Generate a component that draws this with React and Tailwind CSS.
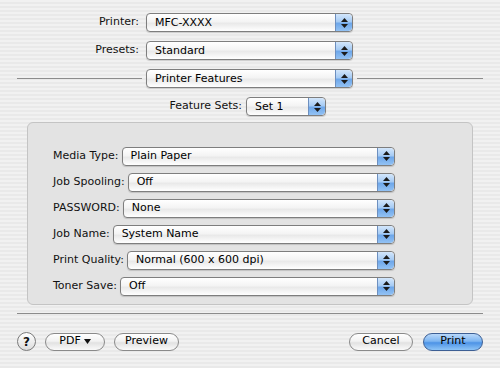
import React from 'react';

function Arrows() {
    return (
        <div className="flex w-[17px] flex-col items-center justify-center gap-[2px] self-stretch rounded-r-[4px] border-l border-[#6d8fbf] bg-[linear-gradient(to_bottom,#d3e6fb_0%,#a6cbf4_45%,#6ea7ea_55%,#93c2f4_100%)]">
            <svg width="7" height="4" viewBox="0 0 7 4"><path d="M3.5 0L7 4H0Z" fill="#1b1b1b" /></svg>
            <svg width="7" height="4" viewBox="0 0 7 4"><path d="M0 0H7L3.5 4Z" fill="#1b1b1b" /></svg>
        </div>
    );
}

function Popup({ value, className = '' }) {
    return (
        <div className={`flex h-[19px] items-center overflow-hidden rounded-[4px] border border-[#7e7e7e] bg-[linear-gradient(to_bottom,#ffffff_0%,#f4f4f4_45%,#e9e9e9_55%,#ffffff_100%)] shadow-[0_1px_1px_rgba(0,0,0,0.15)] ${className}`}>
            <span className="flex-1 whitespace-nowrap pl-[8px] leading-[16px] text-[#000]">{value}</span>
            <Arrows />
        </div>
    );
}

function Row({ label, value }) {
    return (
        <div className="flex h-[18px] items-center">
            <span className="pr-[3px] whitespace-nowrap">{label}</span>
            <Popup value={value} className="h-[18px] flex-1" />
        </div>
    );
}

function Button({ children, className = '' }) {
    return (
        <button type="button"
                className={`flex h-[18px] items-center justify-center rounded-full border border-[#8a8a8a] bg-[linear-gradient(to_bottom,#ffffff_0%,#f2f2f2_45%,#e2e2e2_55%,#fafafa_100%)] text-[#000] ${className}`}>
            {children}
        </button>
    );
}

const features = [
    ['Media Type:', 'Plain Paper'],
    ['Job Spooling:', 'Off'],
    ['PASSWORD:', 'None'],
    ['Job Name:', 'System Name'],
    ['Print Quality:', 'Normal (600 x 600 dpi)'],
    ['Toner Save:', 'Off'],
];

export default function App() {
    return (
        <div className="relative h-[368px] w-[500px] overflow-hidden bg-[repeating-linear-gradient(to_bottom,#f1f1f1_0px,#f1f1f1_2px,#e9e9e9_2px,#e9e9e9_4px)] font-['DejaVu_Sans',sans-serif] text-[11px] text-[#111]">
            <div className="flex flex-col gap-[9px] pt-[13px]">
                <div className="flex items-center">
                    <span className="w-[139px] text-right">Printer:</span>
                    <Popup value="MFC-XXXX" className="ml-[7px] w-[207px]" />
                </div>
                <div className="flex items-center">
                    <span className="w-[139px] text-right">Presets:</span>
                    <Popup value="Standard" className="ml-[7px] w-[207px]" />
                </div>
                <div className="flex items-center">
                    <div className="ml-[17px] h-px w-[125px] bg-[#8c8c8c]" />
                    <Popup value="Printer Features" className="ml-[4px] w-[207px]" />
                    <div className="ml-[4px] h-px w-[126px] bg-[#8c8c8c]" />
                </div>
                <div className="flex items-center">
                    <span className="w-[242px] text-right">Feature Sets:</span>
                    <Popup value="Set 1" className="ml-[4px] w-[80px]" />
                </div>
            </div>

            <div className="mx-[27px] mt-[6px] flex h-[183px] flex-col gap-[8px] rounded-[6px] border border-[#c4c4c4] bg-[#e3e3e3] pl-[25px] pr-[77px] pt-[24px]">
                {features.map(([label, value]) => (
                    <Row key={label} label={label} value={value} />
                ))}
            </div>

            <div className="mx-[17px] mt-[8px] h-px bg-[#8c8c8c]" />

            <div className="flex items-center px-[17px] pt-[18px]">
                <div className="flex h-[19px] w-[19px] items-center justify-center rounded-full border border-[#7a7a7a] bg-[linear-gradient(to_bottom,#ffffff,#dcdcdc)] text-[12px] font-bold">?</div>
                <Button className="ml-[9px] w-[60px] gap-[3px]">
                    PDF
                    <svg width="7" height="5" viewBox="0 0 7 5"><path d="M0 0H7L3.5 5Z" fill="#111" /></svg>
                </Button>
                <Button className="ml-[9px] w-[65px]">Preview</Button>
                <Button className="ml-auto w-[64px]">Cancel</Button>
                <button type="button"
                        className="ml-[10px] flex h-[18px] w-[60px] items-center justify-center rounded-full border border-[#3d5f94] bg-[linear-gradient(to_bottom,#b9d8fa_0%,#7db5f1_45%,#4d93e6_55%,#8ec5f7_100%)] text-[#000]">
                    Print
                </button>
            </div>
        </div>
    );
}
